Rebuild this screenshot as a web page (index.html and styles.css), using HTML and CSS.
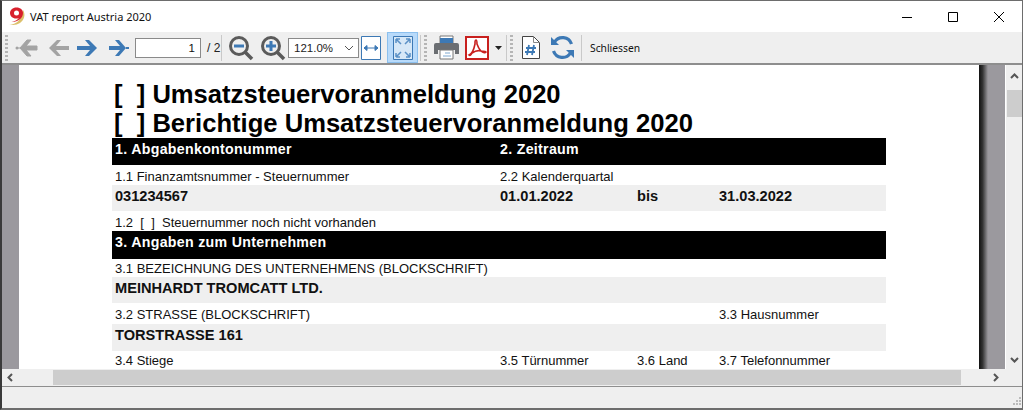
FILE: index.html
```html
<!DOCTYPE html>
<html lang="de">
<head>
<meta charset="utf-8">
<title>VAT report Austria 2020</title>
<link rel="stylesheet" href="styles.css">
</head>
<body>
<div class="window">
  <header class="titlebar">
    <svg class="logo" width="17" height="19" viewBox="0 0 17 19"><path d="M14 3c3 5 1 10-3 13-3 2-7 2.500-11 1.500 5 0 9-2 11-6z" fill="#dcc06a"/><path d="M7.500 0.500c-4 0-6.500 2.500-6.500 5.500s2.500 5.500 6 5.500c1.300 0 2.200-.2 3-.6-1.500 2-4 3.300-7.500 3.900 5 .5 11.500-2.500 11.500-8.800C14 3 11.500.500 7.500.500zm0 3a2.500 2.500 0 1 1 0 5 2.500 2.500 0 0 1 0-5z" fill="#d8202c"/></svg>
    <span class="title">VAT report Austria 2020</span>
    <div class="winctl">
      <svg width="12" height="12" viewBox="0 0 12 12"><path d="M1 6.500h10" stroke="#000" fill="none"/></svg>
      <svg width="12" height="12" viewBox="0 0 12 12"><path d="M1.500 1.500h9v9h-9z" stroke="#000" fill="none"/></svg>
      <svg width="12" height="12" viewBox="0 0 12 12"><path d="M1 1l10 10M11 1L1 11" stroke="#000" fill="none"/></svg>
    </div>
  </header>

  <nav class="toolbar">
    <span class="grip"></span>
    <svg class="ic first-ic" width="23" height="20" viewBox="0 0 23 20"><path d="M1 10h4M22 8v4h-11l5 6h-4l-7-8 7-8h4l-5 6z" fill="#a3a3a3" stroke="#a3a3a3"/><circle cx="2" cy="10" r="1.500" fill="#a3a3a3"/></svg>
    <svg class="ic" width="23" height="20" viewBox="0 0 23 20"><path d="M23 8v4H10l5 6h-4l-8-8 8-8h4l-5 6z" fill="#a3a3a3"/></svg>
    <svg class="ic" width="23" height="20" viewBox="0 0 23 20"><path d="M0 8v4h13l-5 6h4l8-8-8-8H8l5 6z" fill="#3d79b5"/></svg>
    <svg class="ic" width="23" height="20" viewBox="0 0 23 20"><path d="M1 8v4h11l-5 6h4l7-8-7-8H7l5 6zM18 9h3v2h-3z" fill="#3d79b5"/></svg>
    <span class="pagebox">1</span>
    <span class="pagecount">/ 2</span>
    <span class="sep"></span>
    <svg class="zoomic" width="26" height="26" viewBox="0 0 26 26"><circle cx="11" cy="11" r="8.500" fill="none" stroke="#5b5b5b" stroke-width="3"/><path d="M17 17l7 7" stroke="#5b5b5b" stroke-width="3.500"/><path d="M6 11h10" stroke="#3d79b5" stroke-width="3"/></svg>
    <svg class="zoomic" width="26" height="26" viewBox="0 0 26 26"><circle cx="11" cy="11" r="8.500" fill="none" stroke="#5b5b5b" stroke-width="3"/><path d="M17 17l7 7" stroke="#5b5b5b" stroke-width="3.500"/><path d="M6 11h10M11 6v10" stroke="#3d79b5" stroke-width="3"/></svg>
    <span class="combo"><span class="combo-val">121.0%</span>
      <svg width="12" height="8" viewBox="0 0 12 8"><path d="M2 2l4 4 4-4" fill="none" stroke="#555"/></svg></span>
    <svg class="fit" width="20" height="24" viewBox="0 0 20 24"><path d="M.5.500h19v23H.500z" fill="#fff" stroke="#3d79b5"/><path d="M3 12h14M3 12l3-2.500v5zM17 12l-3-2.500v5z" fill="#3d79b5" stroke="#3d79b5"/></svg>
    <span class="activebtn">
      <svg width="20" height="24" viewBox="0 0 20 24"><path d="M.5.500h19v23H.500z" fill="#d7e8f7" stroke="#3d79b5"/><path d="M3 3l5 5M17 3l-5 5M3 21l5-5M17 21l-5-5M3 3h4M3 3v4M17 3h-4M17 3v4M3 21h4M3 21v-4M17 21h-4M17 21v-4" fill="none" stroke="#5a90c6" stroke-width="1.500"/></svg>
    </span>
    <span class="sep"></span>
    <span class="grip"></span>
    <svg class="printer" width="25" height="25" viewBox="0 0 25 25"><path d="M6 1h13v7H6z" fill="#fff" stroke="#777"/><path d="M6 3h13v5H6z" fill="#3d79b5"/><path d="M2 8h21a2 2 0 0 1 2 2v9h-4v-4H4v4H0v-9a2 2 0 0 1 2-2z" fill="#6b6e72"/><path d="M6 15h13v9H6z" fill="#fff" stroke="#777"/><path d="M11 18h5M9 21h8" stroke="#7fa8d0"/></svg>
    <svg class="pdf" width="24" height="24" viewBox="0 0 24 24"><path d="M1 1h22v22H1z" fill="#fff" stroke="#c8201e" stroke-width="2"/><path d="M4 19c3-1 5-6 6-11 0-2 0-4 1-4s1 3 1 4c1 3 3 6 4 7 2 0 5 0 5 1s-3 1-5-1c-3-1-6 0-9 2-1 2-2 3-3 2z" fill="none" stroke="#c8201e" stroke-width="1.600"/></svg>
    <svg class="drop" width="7" height="4" viewBox="0 0 7 4"><path d="M0 0h7L3.500 4z" fill="#222"/></svg>
    <span class="sep"></span>
    <span class="grip"></span>
    <svg class="hashdoc" width="18" height="23" viewBox="0 0 18 23"><path d="M.5.500h11l6 6v16H.500z" fill="#fff" stroke="#444"/><path d="M11.500.500v6h6" fill="none" stroke="#888"/><path d="M7 9l-2 10M12 9l-2 10M4 12h10M3 16h10" stroke="#3d79b5" stroke-width="1.800"/></svg>
    <svg class="reload" width="25" height="25" viewBox="0 0 25 25"><path d="M21.500 9A9.500 9.500 0 0 0 4.500 7M3.500 16a9.500 9.500 0 0 0 17 2" fill="none" stroke="#3d79b5" stroke-width="3.200"/><path d="M1 2v8h8zM24 23v-8h-8z" fill="#3d79b5"/></svg>
    <span class="sep"></span>
    <span class="close-btn">Schliessen</span>
  </nav>

  <div class="middle">
    <main class="viewport">
      <div class="margin"></div>
      <article class="page">
        <h1 class="doc-title">[ &nbsp;] Umsatzsteuervoranmeldung 2020</h1>
        <h1 class="doc-title">[ &nbsp;] Berichtige Umsatzsteuervoranmeldung 2020</h1>
        <div class="row band h27"><span class="c1">1. Abgabenkontonummer</span><span class="c2">2. Zeitraum</span></div>
        <div class="row small h20 down"><span class="c1">1.1 Finanzamtsnummer - Steuernummer</span><span class="c2">2.2 Kalenderquartal</span></div>
        <div class="row fill strong h26"><span class="c1">031234567</span><span class="c2">01.01.2022</span><span class="c3">bis</span><span class="c4">31.03.2022</span></div>
        <div class="row small h20 down"><span class="c1">1.2 &nbsp;[ &nbsp;] &nbsp;Steuernummer noch nicht vorhanden</span></div>
        <div class="row band h28"><span class="c1">3. Angaben zum Unternehmen</span></div>
        <div class="row small h18 tight"><span class="c1">3.1 BEZEICHNUNG DES UNTERNEHMENS (BLOCKSCHRIFT)</span></div>
        <div class="row fill strong h26"><span class="c1">MEINHARDT TROMCATT LTD.</span></div>
        <div class="row small h21 down"><span class="c1">3.2 STRASSE (BLOCKSCHRIFT)</span><span class="c4">3.3 Hausnummer</span></div>
        <div class="row fill strong h27"><span class="c1">TORSTRASSE 161</span></div>
        <div class="row small h18 tight"><span class="c1">3.4 Stiege</span><span class="c2">3.5 Türnummer</span><span class="c3">3.6 Land</span><span class="c4">3.7 Telefonnummer</span></div>
      </article>
      <div class="shadow"></div>
    </main>
    <aside class="vscroll">
      <svg width="9" height="6" viewBox="0 0 9 6"><path d="M1 5l3.500-3.500L8 5" fill="none" stroke="#555" stroke-width="2"/></svg>
      <span class="vthumb"></span>
      <svg class="vdown" width="9" height="6" viewBox="0 0 9 6"><path d="M1 1l3.500 3.500L8 1" fill="none" stroke="#555" stroke-width="2"/></svg>
    </aside>
  </div>

  <div class="hscroll">
    <svg width="6" height="9" viewBox="0 0 6 9"><path d="M5 1L1.500 4.500 5 8" fill="none" stroke="#555" stroke-width="2"/></svg>
    <span class="hthumb"></span>
    <svg width="6" height="9" viewBox="0 0 6 9"><path d="M1 1l3.500 3.500L1 8" fill="none" stroke="#555" stroke-width="2"/></svg>
  </div>

  <footer class="statusbar">
    <svg width="9" height="9" viewBox="0 0 9 9"><path d="M7 0h2v2H7zM4 3h2v2H4zM7 3h2v2H7zM1 6h2v2H1zM4 6h2v2H4zM7 6h2v2H7z" fill="#bbb"/></svg>
  </footer>
</div>
</body>
</html>
```
FILE: styles.css
```css
* { box-sizing: border-box; }
html, body { margin: 0; height: 100%; overflow: hidden; }
body { font-family: "Liberation Sans", Arial, sans-serif; background: #fff; }

.window {
  width: 1023px;
  height: 410px;
  display: flex;
  flex-direction: column;
  border-top: 1px solid #6d6d6d;
  border-left: 2px solid #3a3a3a;
  border-right: 1px solid #6d6d6d;
  border-bottom: 2px solid #6d6d6d;
  background: #efefef;
}

.titlebar {
  height: 31px;
  flex: none;
  display: flex;
  align-items: center;
  background: #fff;
  padding-left: 7px;
}
.logo { margin-right: 4px; }
.title { font-family: "Noto Sans", sans-serif; font-size: 11px; color: #111; }
.winctl { margin-left: auto; display: flex; gap: 34px; padding-right: 17px; }

.toolbar {
  height: 33px;
  flex: none;
  display: flex;
  align-items: center;
  background: #efefef;
  border-bottom: 2px solid #8e8e8e;
  padding-left: 3px;
}
.grip {
  width: 3px;
  height: 26px;
  flex: none;
  background: repeating-linear-gradient(#b5b5b5 0 2px, transparent 2px 4px);
}
.ic { flex: none; margin-right: 8px; }
.first-ic { margin-left: 7px; }
.pagebox {
  width: 66px;
  height: 20px;
  margin-left: -4px;
  background: #fff;
  border: 1px solid #8a8a8a;
  font-size: 11.500px;
  line-height: 18px;
  text-align: right;
  padding-right: 5px;
  color: #111;
}
.pagecount { font-size: 12px; color: #222; margin-left: 6px; width: 14px; }
.sep { width: 1px; height: 26px; background: #c9c9c9; flex: none; }
.zoomic { margin-left: 6px; flex: none; }
.zoomic + .zoomic { margin-left: 6px; }
.combo {
  width: 71px;
  height: 20px;
  margin-left: 2px;
  display: flex;
  align-items: center;
  justify-content: space-between;
  background: #fff;
  border: 1px solid #8a8a8a;
  font-size: 11.500px;
  padding: 0 3px 0 5px;
  color: #222;
}
.fit { margin-left: 2px; flex: none; }
.activebtn {
  width: 31px;
  height: 31px;
  margin-left: 6px;
  display: flex;
  align-items: center;
  justify-content: center;
  background: #b8dafa;
  border: 1px solid #8cc0ee;
  flex: none;
}
.activebtn + .sep { margin-left: 2px; }
.sep + .grip { margin-left: 3px; }
.printer { margin-left: 7px; flex: none; }
.pdf { margin-left: 6px; flex: none; }
.drop { margin-left: 6px; flex: none; }
.drop + .sep { margin-left: 4px; }
.hashdoc { margin-left: 9px; flex: none; }
.reload { margin-left: 10px; flex: none; }
.reload + .sep { margin-left: 6px; }
.close-btn { margin-left: 8px; font-family: "Noto Sans", sans-serif; font-size: 10.300px; color: #111; }

.middle { height: 304px; flex: none; display: flex; }
.viewport {
  flex: 1;
  min-width: 0;
  display: flex;
  background: #9b999e;
  overflow: hidden;
}
.margin { width: 17px; flex: none; }
.page {
  width: 960px;
  height: 304px;
  flex: none;
  background: #fff;
  padding: 15px 93px 0;
  color: #000;
  overflow: hidden;
}
.shadow {
  width: 9px;
  flex: none;
  background: linear-gradient(90deg, #111, #333 40%, #9b999e);
}
.doc-title {
  margin: 0;
  font-size: 25.600px;
  font-weight: 700;
  line-height: 29px;
  height: 29px;
  padding-left: 2px;
  white-space: nowrap;
}
.row {
  display: grid;
  grid-template-columns: 385px 137px 82px 170px;
  align-items: start;
  padding-top: 3px;
  white-space: nowrap;
}
.row span { padding-left: 3px; }
.c1 { grid-column: 1; }
.c2 { grid-column: 2; }
.c3 { grid-column: 3; }
.c4 { grid-column: 4; }
.band { background: #000; color: #fff; font-weight: 700; font-size: 14.200px; letter-spacing: .3px; }
.fill { background: #efefef; }
.strong { font-weight: 700; font-size: 14.600px; color: #111; }
.small { font-size: 13px; line-height: 15px; color: #111; }
.down { padding-top: 4px; }
.tight { padding-top: 2px; }
.h18 { height: 18px; }
.h20 { height: 20px; }
.h21 { height: 21px; }
.h26 { height: 26px; }
.h27 { height: 27px; }
.h28 { height: 28px; }

.vscroll {
  width: 17px;
  flex: none;
  display: flex;
  flex-direction: column;
  align-items: center;
  padding-top: 8px;
  background: #efefef;
  border-left: 1px solid #fff;
}
.vthumb { width: 15px; height: 27px; background: #cdcdcd; margin-top: 11px; }
.vdown { margin-top: auto; margin-bottom: 6px; }

.hscroll {
  height: 17px;
  flex: none;
  display: flex;
  align-items: center;
  background: #efefef;
  padding: 0 5px 0 5px;
}
.hthumb { height: 15px; width: 908px; margin-left: 40px; background: #cdcdcd; }
.hscroll svg:last-child { margin-left: 32px; }

.statusbar {
  flex: 1;
  display: flex;
  justify-content: flex-end;
  align-items: flex-end;
  padding: 0 1px 2px 0;
  border-top: 1px solid #8e8e8e;
}
```
